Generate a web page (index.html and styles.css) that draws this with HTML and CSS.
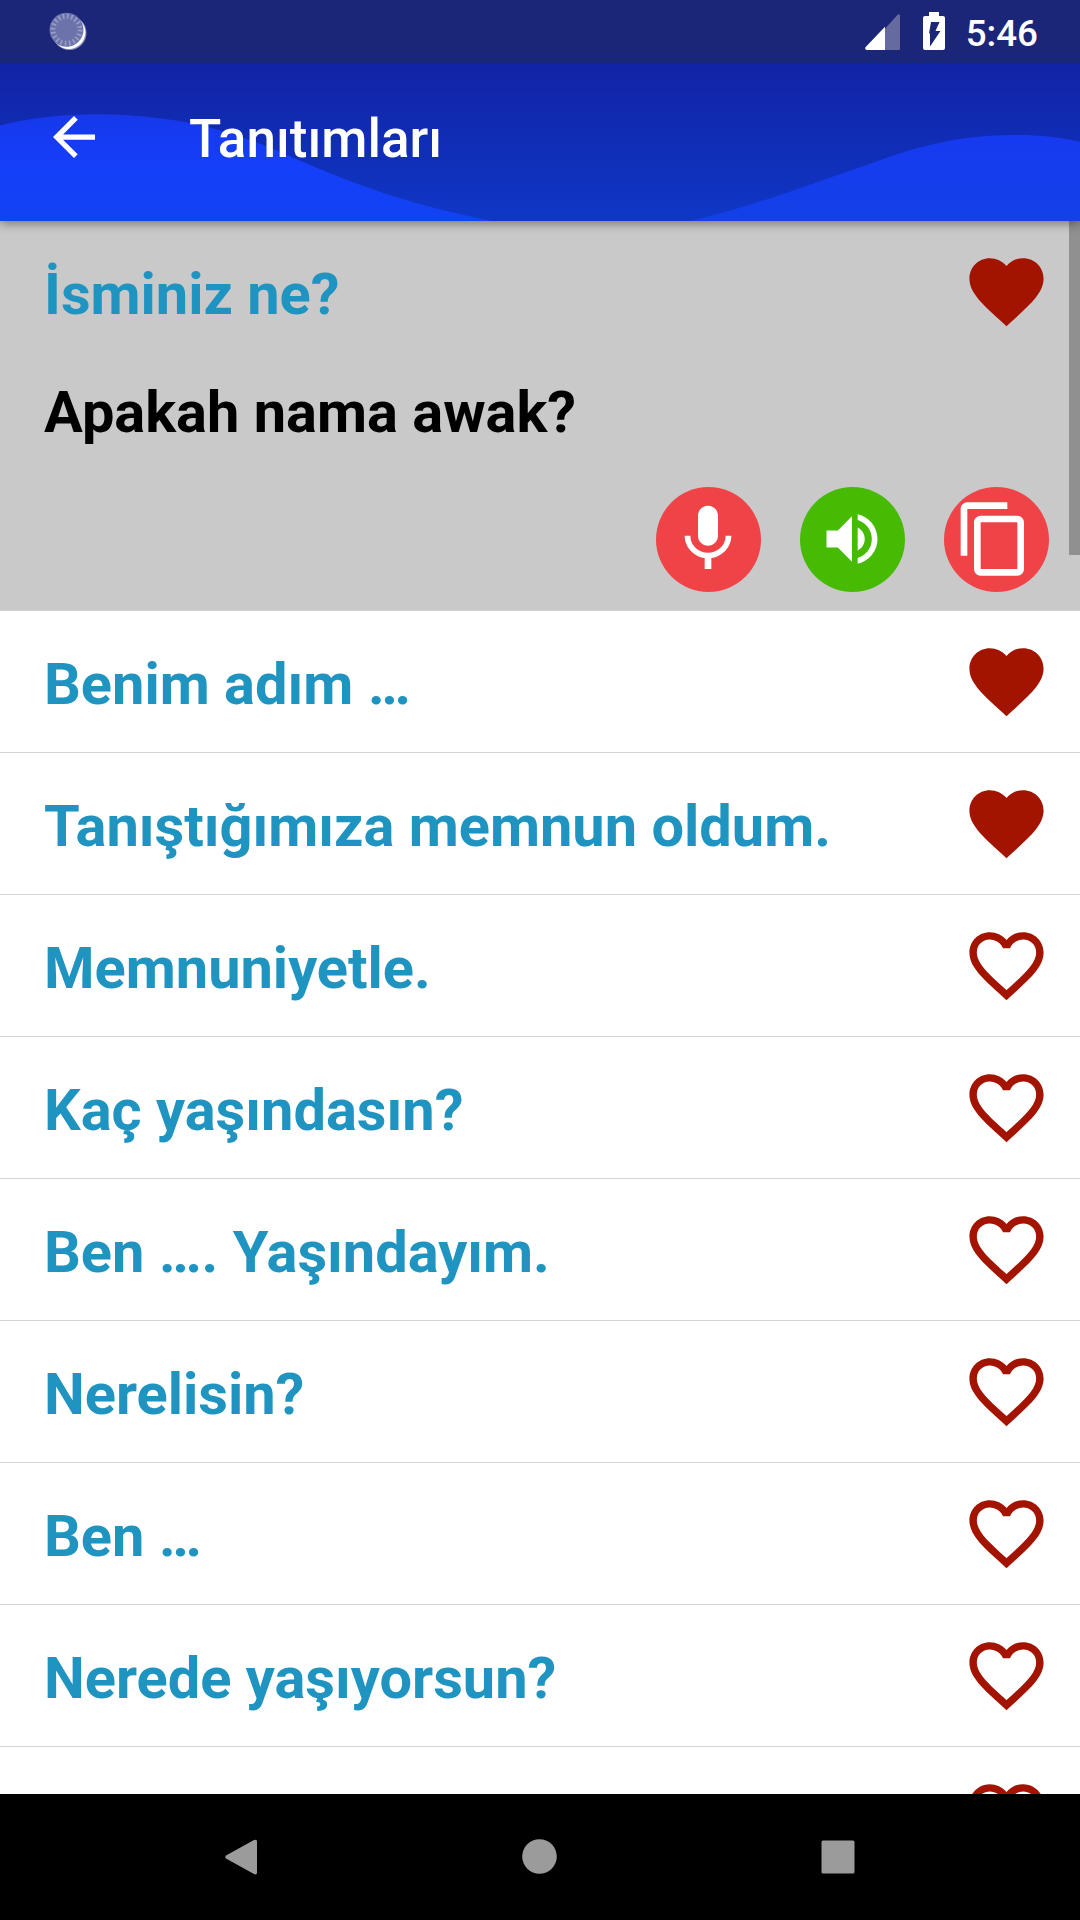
FILE: index.html
```html
<!DOCTYPE html>
<html lang="tr">
    <head>
        <meta charset="UTF-8">
        <title>Tanıtımları</title>
        <link rel="stylesheet" href="styles.css">
    </head>
    <body>
        <svg class="defs" width="0" height="0">
            <symbol id="heart" viewBox="0 0 24 24">
                <path d="M12 21.35l-1.45-1.32C5.4 15.36 2 12.28 2 8.5 2 5.42 4.42 3 7.5 3c1.74 0 3.41.81 4.5 2.09C13.09 3.81 14.76 3 16.5 3 19.58 3 22 5.42 22 8.5c0 3.78-3.4 6.86-8.55 11.54L12 21.35z"/>
            </symbol>
            <symbol id="heart-border" viewBox="0 0 24 24">
                <path d="M16.5 3c-1.74 0-3.41.81-4.5 2.09C10.91 3.81 9.24 3 7.5 3 4.42 3 2 5.42 2 8.5c0 3.78 3.4 6.86 8.55 11.54L12 21.35l1.45-1.32C18.6 15.36 22 12.28 22 8.5 22 5.42 19.58 3 16.5 3zm-4.4 15.55l-.1.1-.1-.1C7.14 14.24 4 11.39 4 8.5 4 6.5 5.5 5 7.5 5c1.54 0 3.04.99 3.57 2.36h1.87C13.46 5.99 14.96 5 16.5 5c2 0 3.5 1.5 3.5 3.5 0 2.89-3.14 5.74-7.9 10.05z"/>
            </symbol>
        </svg>

        <div class="status">
            <svg class="sync" width="40" height="40" viewBox="0 0 40 40">
                <circle cx="21.5" cy="21" r="17" fill="#8d93bd"/>
                <circle cx="20.8" cy="20.3" r="16.6" fill="#fff"/>
                <circle cx="18.5" cy="17.700" r="17" fill="#6c72aa"/>
                <circle cx="18.5" cy="17.700" r="13.5" fill="none" stroke="#989dc6" stroke-width="5" stroke-dasharray="1.7 2.54"/>
            </svg>
            <div class="status-right">
                <svg width="35" height="36" viewBox="0 0 35 36">
                    <path d="M20 14.8V36h13.500q1.500 0 1.500-1.500V1.500q-.6-2.200-2.400-.7z" fill="#666b9f"/>
                    <path d="M20 12.800V36H1.500q-2.400-.8-.8-3z" fill="#fff"/>
                </svg>
                <svg class="battery" width="22" height="38" viewBox="0 0 22 38">
                    <path d="M6 0h10v4h4q2 0 2 2v30q0 2-2 2H2q-2 0-2-2V6q0-2 2-2h4z" fill="#fff"/>
                    <path d="M8 10h8.500l-4 9H17.500L7 34.500V21.500H6z" fill="#1b2678"/>
                </svg>
                <span class="clock">5:46</span>
            </div>
        </div>

        <div class="toolbar">
            <svg class="waves" width="1080" height="158" viewBox="0 63 1080 158">
                <defs>
                    <linearGradient id="wave" x1="0" y1="0" x2="0" y2="1">
                        <stop offset="0" stop-color="#1738ea"/>
                        <stop offset="0.5" stop-color="#153ffa"/>
                        <stop offset="1" stop-color="#1242f2"/>
                    </linearGradient>
                    <linearGradient id="wave2" x1="0" y1="0" x2="0" y2="1">
                        <stop offset="0" stop-color="#173af0"/>
                        <stop offset="1" stop-color="#1340e8"/>
                    </linearGradient>
                </defs>
                <path d="M0 125.500C50 112 110 112 158 118C215 125 250 139 296 159C355 185 415 206 492 221H0z" fill="url(#wave)"/>
                <path d="M690 221C755 206 810 184 864 166C900 153 945 135 1015 135C1040 135 1060 137 1080 142V221z" fill="url(#wave2)"/>
            </svg>
            <svg class="back" width="42" height="42" viewBox="4 4 16 16">
                <path d="M20 11H7.830l5.590-5.590L12 4l-8 8 8 8 1.410-1.410L7.830 13H20v-2z" fill="#fff"/>
            </svg>
            <span class="title">Tanıtımları</span>
        </div>

        <div class="list">
            <div class="row open">
                <div class="line">
                    <span class="text">İsminiz ne?</span>
                    <svg class="heart"><use href="#heart"/></svg>
                </div>
                <div class="translation">Apakah nama awak?</div>
                <div class="actions">
                    <div class="btn red">
                        <svg width="80" height="80" viewBox="0 0 24 24"><path d="M12 14c1.660 0 2.990-1.340 2.990-3L15 5c0-1.660-1.340-3-3-3S9 3.340 9 5v6c0 1.660 1.340 3 3 3zm5.300-3c0 3-2.540 5.100-5.300 5.100S6.700 14 6.700 11H5c0 3.410 2.720 6.230 6 6.720V21h2v-3.280c3.280-.48 6-3.300 6-6.720h-1.700z"/></svg>
                    </div>
                    <div class="btn green">
                        <svg width="68" height="68" viewBox="0 0 24 24"><path d="M3 9v6h4l5 5V4L7 9H3zm13.500 3c0-1.770-1.020-3.290-2.500-4.030v8.050c1.480-.73 2.500-2.250 2.500-4.020zM14 3.230v2.060c2.890.86 5 3.540 5 6.710s-2.110 5.850-5 6.710v2.060c4.010-.91 7-4.490 7-8.770s-2.990-7.860-7-8.770z"/></svg>
                    </div>
                    <div class="btn red copy">
                        <svg width="80" height="80" viewBox="0 0 24 24"><path d="M16 1H4c-1.100 0-2 .9-2 2v14h2V3h12V1zm3 4H8c-1.100 0-2 .9-2 2v14c0 1.100.9 2 2 2h11c1.100 0 2-.9 2-2V7c0-1.100-.9-2-2-2zm0 16H8V7h11v14z"/></svg>
                    </div>
                </div>
            </div>
            <div class="row">
                <div class="line">
                    <span class="text">Benim adım …</span>
                    <svg class="heart"><use href="#heart"/></svg>
                </div>
            </div>
            <div class="row">
                <div class="line">
                    <span class="text">Tanıştığımıza memnun oldum.</span>
                    <svg class="heart"><use href="#heart"/></svg>
                </div>
            </div>
            <div class="row">
                <div class="line">
                    <span class="text">Memnuniyetle.</span>
                    <svg class="heart"><use href="#heart-border"/></svg>
                </div>
            </div>
            <div class="row">
                <div class="line">
                    <span class="text">Kaç yaşındasın?</span>
                    <svg class="heart"><use href="#heart-border"/></svg>
                </div>
            </div>
            <div class="row">
                <div class="line">
                    <span class="text">Ben …. Yaşındayım.</span>
                    <svg class="heart"><use href="#heart-border"/></svg>
                </div>
            </div>
            <div class="row">
                <div class="line">
                    <span class="text">Nerelisin?</span>
                    <svg class="heart"><use href="#heart-border"/></svg>
                </div>
            </div>
            <div class="row">
                <div class="line">
                    <span class="text">Ben …</span>
                    <svg class="heart"><use href="#heart-border"/></svg>
                </div>
            </div>
            <div class="row">
                <div class="line">
                    <span class="text">Nerede yaşıyorsun?</span>
                    <svg class="heart"><use href="#heart-border"/></svg>
                </div>
            </div>
            <div class="row">
                <div class="line">
                    <span class="text"></span>
                    <svg class="heart"><use href="#heart-border"/></svg>
                </div>
            </div>
            <div class="scrollbar"></div>
        </div>

        <div class="nav">
            <svg width="36" height="36" viewBox="0 0 36 36"><path d="M2 16.500L29.500 1.300Q33 -.5 33 2.500V33.500Q33 36.500 29.500 34.700L2 19.500Q.5 18 2 16.500z"/></svg>
            <svg width="36" height="36" viewBox="0 0 36 36"><circle cx="17.500" cy="17.500" r="17.300"/></svg>
            <svg width="36" height="36" viewBox="0 0 36 36"><rect x="1.500" y="1.500" width="33" height="33" rx="1.500"/></svg>
        </div>
    </body>
</html>
```
FILE: styles.css
```css
body {
    margin: 0;
    width: 1080px;
    height: 1920px;
    display: flex;
    flex-direction: column;
    overflow: hidden;
    background-color: white;
    font-family: Roboto, "Liberation Sans", sans-serif;
}
svg {
    display: block;
    flex: none;
}
.defs {
    position: absolute;
}
.status {
    position: relative;
    z-index: 2;
    height: 63px;
    flex: none;
    display: flex;
    justify-content: space-between;
    align-items: flex-start;
    padding: 12px 42px 0 48px;
    box-sizing: border-box;
    background-color: #1b2678;
}
.status-right {
    display: flex;
    align-items: flex-start;
}
.status-right svg:first-child {
    margin-top: 2px;
}
.battery {
    margin: 0 21px 0 23px;
}
.clock {
    color: white;
    font-size: 36.75px;
    font-weight: 500;
    line-height: 43px;
}
.toolbar {
    position: relative;
    z-index: 1;
    height: 158px;
    flex: none;
    display: flex;
    align-items: center;
    padding: 0 53px;
    box-sizing: border-box;
    background: linear-gradient(#1123a5, #0f37c6);
    box-shadow: 0 2px 10px rgba(0, 0, 0, 0.45);
}
.waves {
    position: absolute;
    left: 0;
    top: 0;
}
.back {
    position: relative;
    margin-top: -11px;
}
.title {
    position: relative;
    margin: -7px 0 0 94px;
    color: white;
    font-size: 53px;
    font-weight: 500;
}
.list {
    position: relative;
    height: 1573px;
    flex: none;
    overflow: hidden;
}
.row {
    border-bottom: 1px solid #d4d4d4;
}
.open {
    background-color: #c9c9c9;
}
.line {
    height: 141px;
    display: flex;
    justify-content: space-between;
    align-items: center;
    padding: 0 29px 0 44px;
}
.text, .translation {
    font-size: 57.75px;
    font-weight: bold;
    line-height: 68px;
}
.text {
    color: #2094c0;
    padding-top: 5px;
}
.heart {
    width: 89px;
    height: 89px;
    fill: #a31400;
}
.translation {
    padding: 16px 0 0 44px;
    color: black;
}
.actions {
    display: flex;
    justify-content: flex-end;
    gap: 39px;
    padding: 41px 31px 18px 0;
}
.btn {
    width: 105px;
    height: 105px;
    display: flex;
    align-items: center;
    justify-content: center;
    box-sizing: border-box;
    padding: 0 1px 1px 0;
    border-radius: 50%;
    fill: white;
}
.red {
    background-color: #f04348;
}
.green {
    background-color: #47bb04;
}
.copy {
    padding-right: 5px;
}
.scrollbar {
    position: absolute;
    right: 0;
    top: 0;
    width: 11px;
    height: 334px;
    background-color: #909090;
}
.nav {
    flex: 1;
    display: flex;
    justify-content: center;
    align-items: center;
    gap: 262px;
    background-color: black;
    fill: #9b9b9b;
}
```
